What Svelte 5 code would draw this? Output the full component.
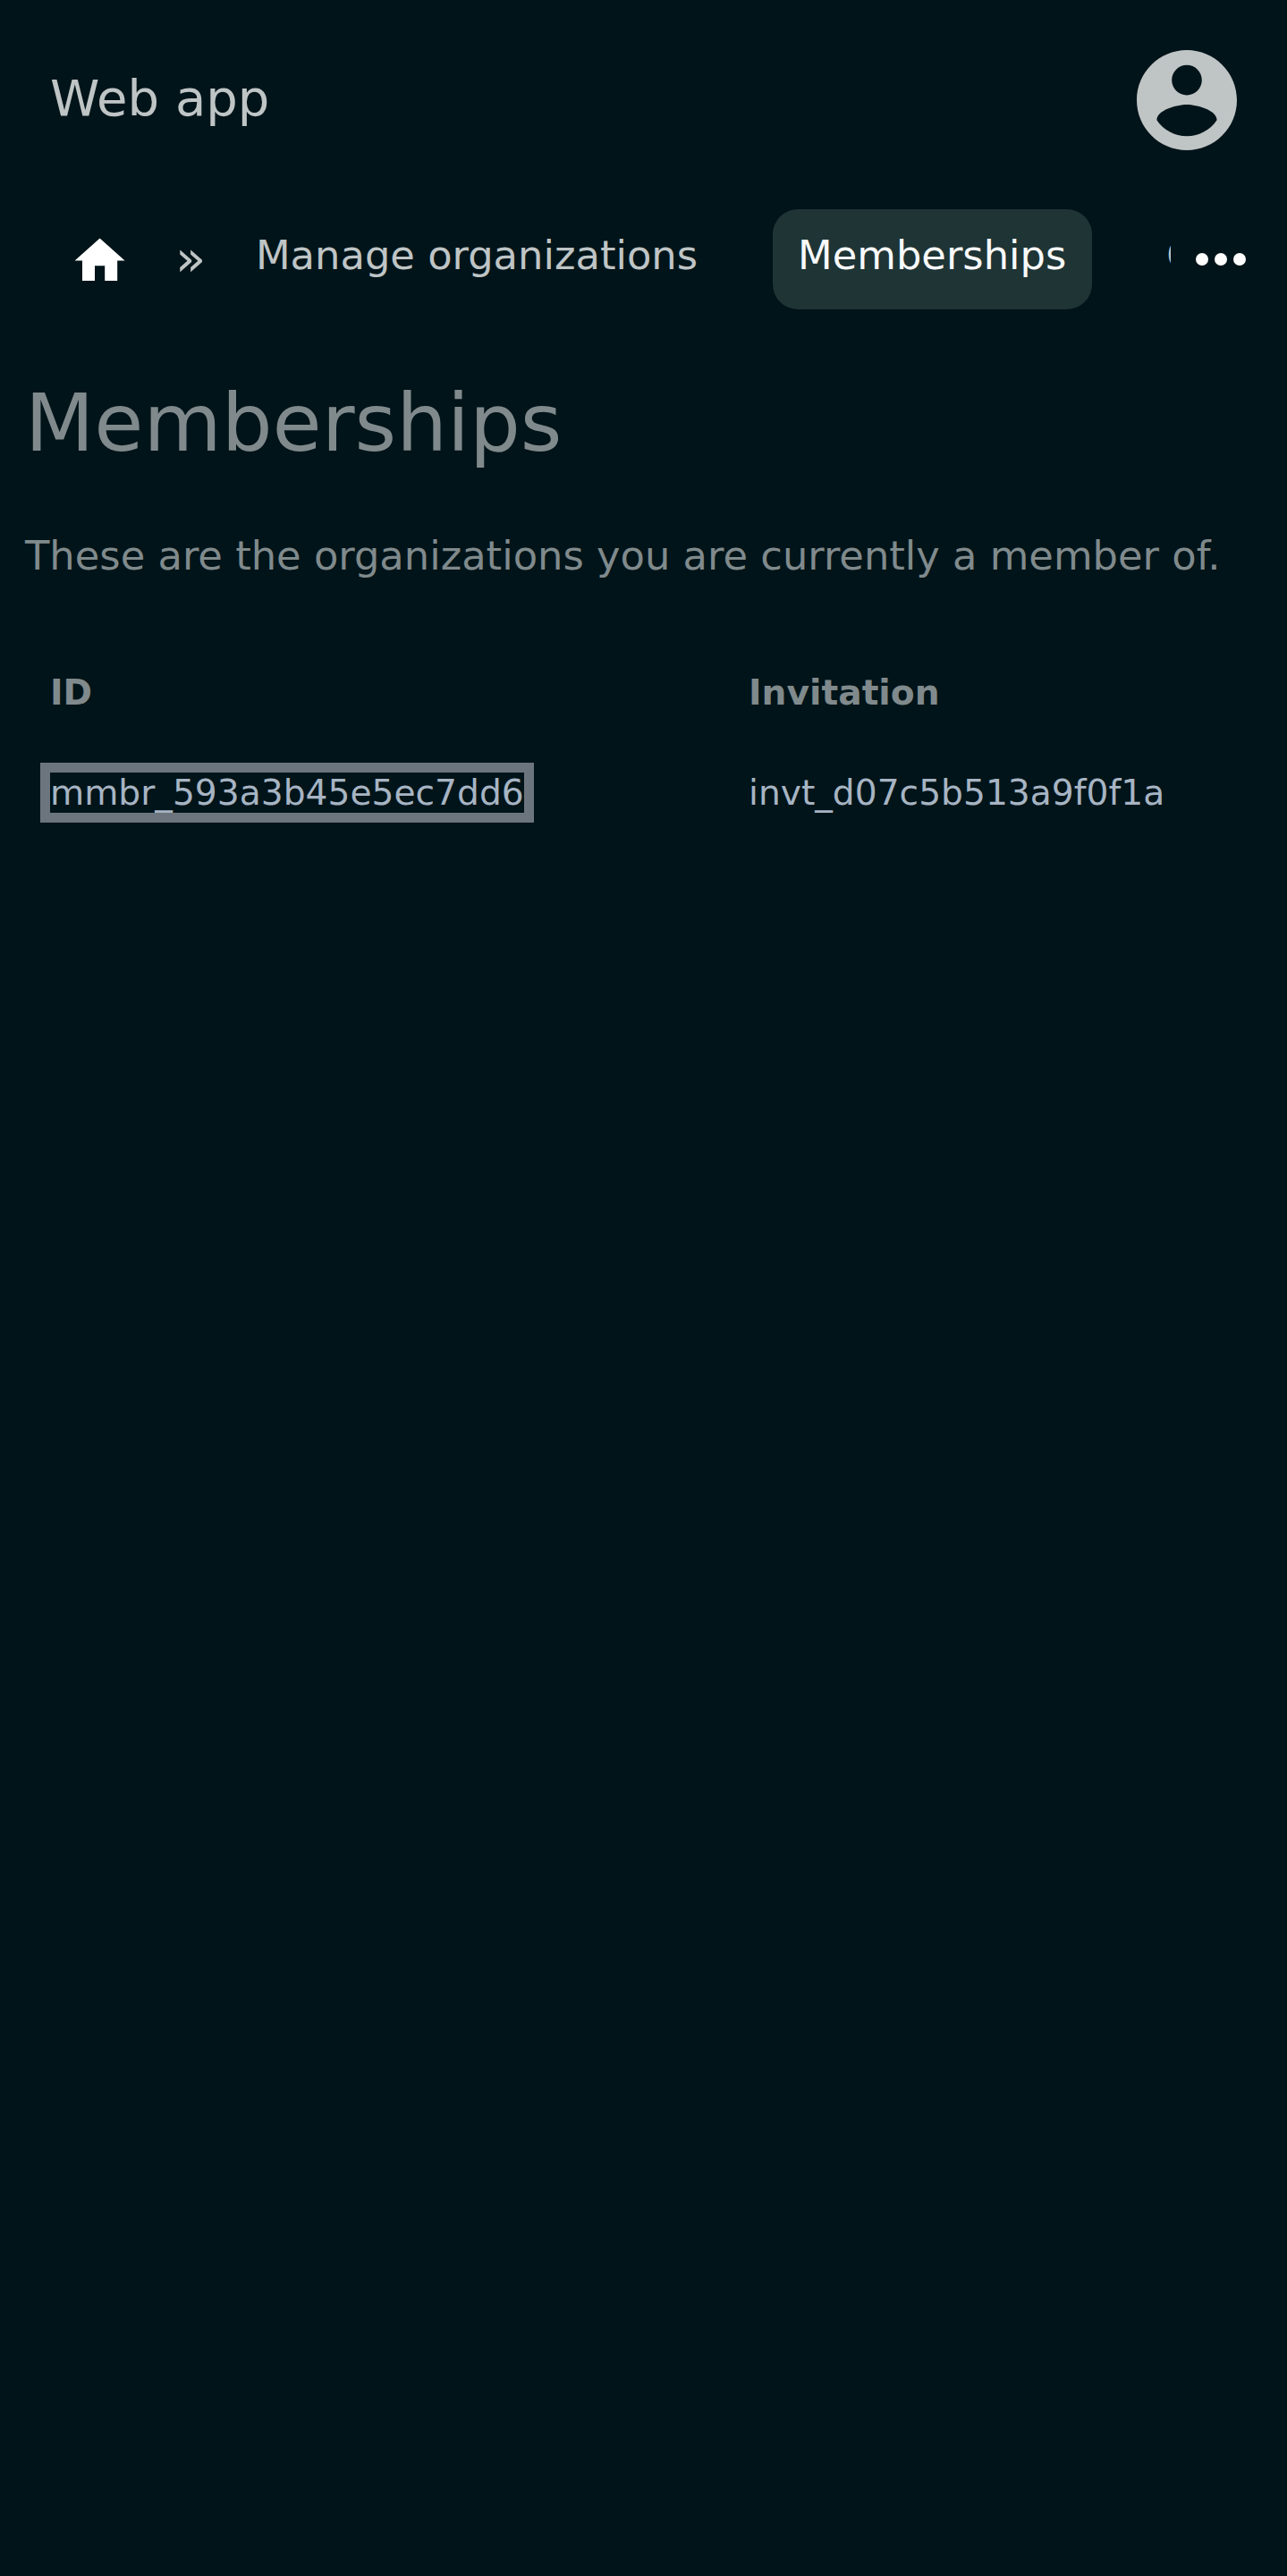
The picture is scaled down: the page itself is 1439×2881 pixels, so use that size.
<script>
  const columns = ['ID', 'Invitation'];
  const rows = [['mmbr_593a3b45e5ec7dd6', 'invt_d07c5b513a9f0f1a']];
</script>

<div class="page">
  <header>
    <span class="brand">Web app</span>
    <svg class="avatar" viewBox="2 2 20 20" aria-label="Account">
      <path d="M12 2C6.48 2 2 6.48 2 12s4.48 10 10 10 10-4.48 10-10S17.52 2 12 2zm0 3c1.66 0 3 1.34 3 3s-1.34 3-3 3-3-1.34-3-3 1.34-3 3-3zm0 14.2c-2.5 0-4.71-1.28-6-3.22.03-1.99 4-3.08 6-3.08 1.99 0 5.97 1.09 6 3.08-1.29 1.94-3.5 3.22-6 3.22z" />
    </svg>
  </header>

  <nav>
    <div class="crumbs">
      <svg class="home" viewBox="0 0 24 24" aria-label="Home">
        <path d="M10 20v-6h4v6h5v-8h3L12 3 2 12h3v8z" />
      </svg>
      <span class="sep">»</span>
      <a class="tab" href="#organizations">Manage organizations</a>
      <a class="tab active" href="#memberships">Memberships</a>
      <a class="tab" href="#create">Create</a>
    </div>
    <svg class="more" viewBox="0 0 24 24" aria-label="More">
      <circle cx="6" cy="12" r="2" />
      <circle cx="12" cy="12" r="2" />
      <circle cx="18" cy="12" r="2" />
    </svg>
  </nav>

  <main>
    <h1>Memberships</h1>
    <p>These are the organizations you are currently a member of.</p>
    <div class="table">
      {#each columns as column}
        <div class="cell head">{column}</div>
      {/each}
      {#each rows as row}
        {#each row as value, i}
          <div class="cell"><a class:focused={i === 0} href="#{value}">{value}</a></div>
        {/each}
      {/each}
    </div>
  </main>
</div>

<style>
  :global(body) {
    background: #001419;
  }
  .page {
    min-height: 2881px;
    box-sizing: border-box;
    background: #001419;
    color: #808a8c;
    font-family: "DejaVu Sans", sans-serif;
    font-size: 44.8px;
    overflow: hidden;
  }
  a {
    text-decoration: none;
  }
  header {
    display: flex;
    justify-content: space-between;
    height: 112px;
    padding: 56px 56.4px 66.2px 56px;
  }
  .brand {
    font-size: 56px;
    line-height: 107px;
    color: #bfc4c5;
  }
  .avatar {
    width: 112px;
    height: 112px;
    fill: #bfc4c5;
  }
  nav {
    display: flex;
    height: 112px;
  }
  .crumbs {
    display: flex;
    width: 1309px;
    box-sizing: border-box;
    padding-left: 78.4px;
    overflow: hidden;
    flex: none;
  }
  .home {
    flex: none;
    width: 67.2px;
    height: 67.2px;
    margin-top: 24px;
    fill: #fff;
  }
  .sep {
    flex: none;
    width: 61.9px;
    margin-left: 50.5px;
    font-size: 56px;
    line-height: 109px;
    color: #bfc4c5;
  }
  .tab {
    flex: none;
    box-sizing: border-box;
    height: 112px;
    padding: 0 28px;
    margin-right: 56px;
    line-height: 103px;
    border-radius: 28px;
    color: #bfc4c5;
    white-space: nowrap;
  }
  .active {
    padding-right: 28.7px;
    margin-right: 55.3px;
    background: #1e3435;
    color: #f8f9fa;
  }
  .more {
    flex: none;
    width: 84px;
    height: 84px;
    margin: 14.2px 0 0 14px;
    fill: #fff;
  }
  main {
    padding: 70.8px 28px 0;
  }
  h1 {
    margin: 0;
    font-size: 89.6px;
    font-weight: 400;
    line-height: 112px;
  }
  p {
    margin: 65px 0 0;
    line-height: 56px;
    white-space: nowrap;
  }
  .table {
    display: grid;
    grid-template-columns: 781px 1fr;
    margin-top: 69px;
    font-size: 39.2px;
  }
  .cell {
    height: 112px;
    padding-left: 28px;
    line-height: 112px;
  }
  .head {
    font-weight: 700;
  }
  .cell a {
    color: #a7b4c3;
  }
  .cell .focused {
    outline: 11px solid #6c757d;
  }
</style>
